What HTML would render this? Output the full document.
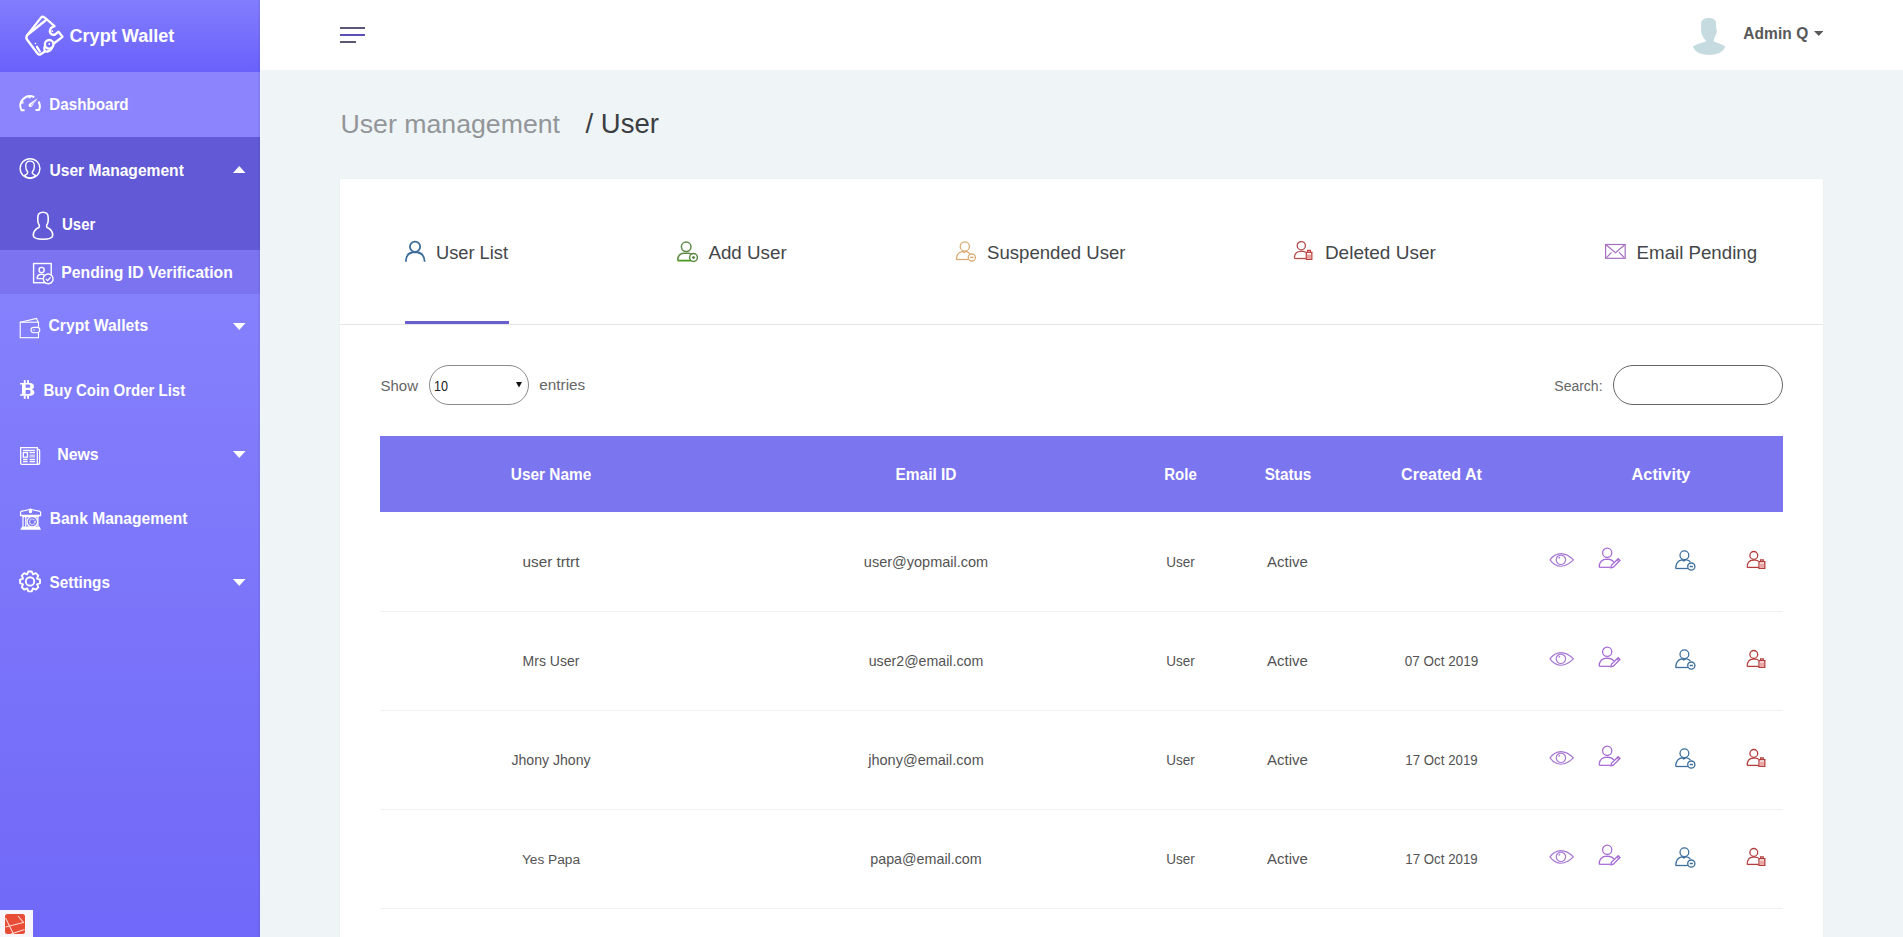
<!DOCTYPE html>
<html><head><meta charset="utf-8">
<style>
html,body{margin:0;padding:0;}
body{width:1903px;height:937px;overflow:hidden;position:relative;background:#eff4f7;font-family:"Liberation Sans",sans-serif;}
.t{position:absolute;white-space:nowrap;}
.i{position:absolute;}
#sb{position:absolute;left:0;top:0;width:260px;height:937px;background:linear-gradient(#8f8cfe,#7068f8);}
#logo{position:absolute;left:0;top:0;width:260px;height:72px;background:linear-gradient(#827dfe,#6a61fb);}
#hdr{position:absolute;left:260px;top:0;width:1643px;height:70px;background:#fff;}
#card{position:absolute;left:340px;top:179px;width:1483px;height:800px;background:#fff;box-shadow:0 0 1px rgba(0,0,0,0.08);}
</style></head><body>
<div id="sb"></div><div id="logo"></div><div style="position:absolute;left:0;top:72px;width:260px;height:65px;background:#8b84fd"></div><div style="position:absolute;left:0;top:137px;width:260px;height:113px;background:#6159d5"></div><div style="position:absolute;left:0;top:250px;width:260px;height:44px;background:#7b73f0"></div><div style="position:absolute;left:258px;top:0;width:2px;height:937px;background:rgba(60,60,90,0.07)"></div><div class="t" style="top:25.66px;font-size:18.1px;line-height:21.72px;font-weight:700;color:#ffffff;left:69.5px;transform:scaleY(1.03);transform-origin:0 17.14px;">Crypt Wallet</div>
<div class="t" style="top:96.21px;font-size:15.2px;line-height:18.24px;font-weight:700;color:#ffffff;left:49.3px;transform:scaleY(1.08);transform-origin:0 14.39px;">Dashboard</div>
<div class="t" style="top:161.83px;font-size:15.6px;line-height:18.72px;font-weight:700;color:#ffffff;left:49.5px;transform:scaleY(1.08);transform-origin:0 14.77px;">User Management</div>
<div class="t" style="top:215.90px;font-size:15.0px;line-height:18.0px;font-weight:700;color:#ffffff;left:62px;transform:scaleY(1.08);transform-origin:0 14.20px;">User</div>
<div class="t" style="top:263.69px;font-size:15.75px;line-height:18.9px;font-weight:700;color:#ffffff;left:61.3px;transform:scaleY(1.08);transform-origin:0 14.91px;">Pending ID Verification</div>
<div class="t" style="top:317.24px;font-size:15.7px;line-height:18.84px;font-weight:700;color:#ffffff;left:48.5px;transform:scaleY(1.08);transform-origin:0 14.86px;">Crypt Wallets</div>
<div class="t" style="top:382.10px;font-size:15.0px;line-height:18.0px;font-weight:700;color:#ffffff;left:43.5px;transform:scaleY(1.08);transform-origin:0 14.20px;">Buy Coin Order List</div>
<div class="t" style="top:445.25px;font-size:15.9px;line-height:19.08px;font-weight:700;color:#ffffff;left:57.2px;transform:scaleY(1.08);transform-origin:0 15.05px;">News</div>
<div class="t" style="top:509.83px;font-size:15.6px;line-height:18.72px;font-weight:700;color:#ffffff;left:49.7px;transform:scaleY(1.08);transform-origin:0 14.77px;">Bank Management</div>
<div class="t" style="top:574.32px;font-size:15.3px;line-height:18.36px;font-weight:700;color:#ffffff;left:49.6px;transform:scaleY(1.08);transform-origin:0 14.48px;">Settings</div>
<svg class="i" style="left:233px;top:165.8px" width="12.5" height="7"><polygon points="0,7 12.5,7 6.25,0" fill="#fff"/></svg>
<svg class="i" style="left:233px;top:323px" width="12.5" height="7"><polygon points="0,0 12.5,0 6.25,7" fill="#fff"/></svg>
<svg class="i" style="left:233px;top:451px" width="12.5" height="7"><polygon points="0,0 12.5,0 6.25,7" fill="#fff"/></svg>
<svg class="i" style="left:233px;top:579px" width="12.5" height="7"><polygon points="0,0 12.5,0 6.25,7" fill="#fff"/></svg>
<div id="hdr"></div><div class="i" style="left:340px;top:27px;width:25px;height:2px;background:#5d5679"></div><div class="i" style="left:340px;top:34px;width:25px;height:2px;background:#5a4fb3"></div><div class="i" style="left:340px;top:41px;width:16px;height:2px;background:#5b5672"></div><div class="t" style="top:25.33px;font-size:15.5px;line-height:18.6px;font-weight:700;color:#585858;left:1743.2px;transform:scaleY(1.06);transform-origin:0 14.67px;letter-spacing:0.1px;">Admin Q</div>
<svg class="i" style="left:1813.5px;top:30.5px" width="9.5" height="5"><polygon points="0,0 9.5,0 4.75,5" fill="#5a5a5a"/></svg>
<div class="t" style="top:108.22px;font-size:26.7px;line-height:32.04px;font-weight:400;color:#939699;left:340.5px;">User management</div>
<div class="t" style="top:107.47px;font-size:27.5px;line-height:33.0px;font-weight:400;color:#3b3e41;left:585.5px;">/ User</div>
<div id="card"></div><div class="t" style="top:242.02px;font-size:18.25px;line-height:21.9px;font-weight:400;color:#444649;left:436px;">User List</div>
<div class="t" style="top:241.50px;font-size:18.8px;line-height:22.56px;font-weight:400;color:#444649;left:708.4px;">Add User</div>
<div class="t" style="top:241.69px;font-size:18.6px;line-height:22.32px;font-weight:400;color:#444649;left:987px;">Suspended User</div>
<div class="t" style="top:241.81px;font-size:19.0px;line-height:22.8px;font-weight:400;color:#444649;left:1324.9px;">Deleted User</div>
<div class="t" style="top:241.60px;font-size:18.7px;line-height:22.44px;font-weight:400;color:#444649;left:1636.6px;">Email Pending</div>
<div class="i" style="left:340px;top:324px;width:1483px;height:1px;background:#e6e6e6"></div><div class="i" style="left:405px;top:321px;width:104px;height:3px;background:#6a5fcf"></div><div class="t" style="top:376.60px;font-size:15.0px;line-height:18.0px;font-weight:400;color:#666;left:380.5px;">Show</div>
<div class="i" style="left:429px;top:365px;width:98px;height:38px;border:1px solid #8a8a8a;border-radius:20px;background:#fff"></div><div class="t" style="top:377.00px;font-size:15px;line-height:18.0px;font-weight:400;color:#222;left:433.6px;transform:scale(0.84,0.99);transform-origin:0 14.5px;">10</div>
<svg class="i" style="left:516px;top:382px" width="6" height="6"><polygon points="0,0 6,0 3,5.5" fill="#111"/></svg><div class="t" style="top:376.32px;font-size:15.3px;line-height:18.36px;font-weight:400;color:#666;left:539.3px;">entries</div>
<div class="t" style="top:377.95px;font-size:14.0px;line-height:16.8px;font-weight:400;color:#666;left:1554.3px;">Search:</div>
<div class="i" style="left:1613px;top:365px;width:168px;height:38px;border:1px solid #666;border-radius:20px;background:#fff"></div><div class="i" style="left:380px;top:436px;width:1403px;height:76px;background:#7b75f0"></div><div class="t" style="top:465.92px;font-size:15.4px;line-height:18.48px;font-weight:700;color:#fff;left:51px;width:1000px;text-align:center;transform:scaleY(1.06);transform-origin:0 14.58px;">User Name</div>
<div class="t" style="top:465.83px;font-size:15.5px;line-height:18.6px;font-weight:700;color:#fff;left:426px;width:1000px;text-align:center;transform:scaleY(1.06);transform-origin:0 14.67px;">Email ID</div>
<div class="t" style="top:466.30px;font-size:15.0px;line-height:18.0px;font-weight:700;color:#fff;left:680.5px;width:1000px;text-align:center;transform:scaleY(1.06);transform-origin:0 14.20px;">Role</div>
<div class="t" style="top:466.02px;font-size:15.3px;line-height:18.36px;font-weight:700;color:#fff;left:788px;width:1000px;text-align:center;transform:scaleY(1.06);transform-origin:0 14.48px;">Status</div>
<div class="t" style="top:465.26px;font-size:16.1px;line-height:19.32px;font-weight:700;color:#fff;left:941.5px;width:1000px;text-align:center;transform:scaleY(1.06);transform-origin:0 15.24px;">Created At</div>
<div class="t" style="top:465.07px;font-size:16.3px;line-height:19.56px;font-weight:700;color:#fff;left:1161px;width:1000px;text-align:center;transform:scaleY(1.06);transform-origin:0 15.43px;">Activity</div>
<div class="t" style="top:553.02px;font-size:15.3px;line-height:18.36px;font-weight:400;color:#535353;left:51px;width:1000px;text-align:center;">user trtrt</div>
<div class="t" style="top:553.77px;font-size:14.5px;line-height:17.4px;font-weight:400;color:#535353;left:426px;width:1000px;text-align:center;">user@yopmail.com</div>
<div class="t" style="top:554.72px;font-size:13.5px;line-height:16.2px;font-weight:400;color:#535353;left:680.5px;width:1000px;text-align:center;transform:scaleY(1.08);transform-origin:0 12.78px;">User</div>
<div class="t" style="top:553.30px;font-size:15.0px;line-height:18.0px;font-weight:400;color:#535353;left:787.5px;width:1000px;text-align:center;">Active</div>
<div class="i" style="left:380px;top:611px;width:1403px;height:1px;background:#f1f1f1"></div><div class="t" style="top:653.25px;font-size:14.0px;line-height:16.8px;font-weight:400;color:#535353;left:51px;width:1000px;text-align:center;">Mrs User</div>
<div class="t" style="top:653.06px;font-size:14.2px;line-height:17.04px;font-weight:400;color:#535353;left:426px;width:1000px;text-align:center;">user2@email.com</div>
<div class="t" style="top:653.72px;font-size:13.5px;line-height:16.2px;font-weight:400;color:#535353;left:680.5px;width:1000px;text-align:center;transform:scaleY(1.08);transform-origin:0 12.78px;">User</div>
<div class="t" style="top:652.30px;font-size:15.0px;line-height:18.0px;font-weight:400;color:#535353;left:787.5px;width:1000px;text-align:center;">Active</div>
<div class="t" style="top:653.72px;font-size:13.5px;line-height:16.2px;font-weight:400;color:#535353;left:941.5px;width:1000px;text-align:center;transform:scaleY(1.06);transform-origin:0 12.78px;">07 Oct 2019</div>
<div class="i" style="left:380px;top:710px;width:1403px;height:1px;background:#f1f1f1"></div><div class="t" style="top:752.15px;font-size:14.1px;line-height:16.92px;font-weight:400;color:#535353;left:51px;width:1000px;text-align:center;">Jhony Jhony</div>
<div class="t" style="top:751.77px;font-size:14.5px;line-height:17.4px;font-weight:400;color:#535353;left:426px;width:1000px;text-align:center;">jhony@email.com</div>
<div class="t" style="top:752.72px;font-size:13.5px;line-height:16.2px;font-weight:400;color:#535353;left:680.5px;width:1000px;text-align:center;transform:scaleY(1.08);transform-origin:0 12.78px;">User</div>
<div class="t" style="top:751.30px;font-size:15.0px;line-height:18.0px;font-weight:400;color:#535353;left:787.5px;width:1000px;text-align:center;">Active</div>
<div class="t" style="top:752.91px;font-size:13.3px;line-height:15.96px;font-weight:400;color:#535353;left:941.5px;width:1000px;text-align:center;transform:scaleY(1.06);transform-origin:0 12.59px;">17 Oct 2019</div>
<div class="i" style="left:380px;top:809px;width:1403px;height:1px;background:#f1f1f1"></div><div class="t" style="top:851.53px;font-size:13.7px;line-height:16.44px;font-weight:400;color:#535353;left:51px;width:1000px;text-align:center;">Yes Papa</div>
<div class="t" style="top:850.96px;font-size:14.3px;line-height:17.16px;font-weight:400;color:#535353;left:426px;width:1000px;text-align:center;">papa@email.com</div>
<div class="t" style="top:851.72px;font-size:13.5px;line-height:16.2px;font-weight:400;color:#535353;left:680.5px;width:1000px;text-align:center;transform:scaleY(1.08);transform-origin:0 12.78px;">User</div>
<div class="t" style="top:850.30px;font-size:15.0px;line-height:18.0px;font-weight:400;color:#535353;left:787.5px;width:1000px;text-align:center;">Active</div>
<div class="t" style="top:851.91px;font-size:13.3px;line-height:15.96px;font-weight:400;color:#535353;left:941.5px;width:1000px;text-align:center;transform:scaleY(1.06);transform-origin:0 12.59px;">17 Oct 2019</div>
<div class="i" style="left:380px;top:908px;width:1403px;height:1px;background:#f1f1f1"></div><svg class="i" style="left:20px;top:10px" width="50" height="50" viewBox="0 0 50 50"><g fill="none" stroke="#ffffff" stroke-width="2.3" stroke-linejoin="round" stroke-linecap="round">
<path d="M7,25.5 L21,7.6 Q22.5,6 24,7.2 L27.5,10 L34.5,16.2 Q30,17.5 29.8,21.5 Q30.5,25.5 35,24.6 L38.5,21.7 L42.5,26.8 L33.8,33.5"/>
<path d="M7,25.5 Q5.5,28 7.5,30.2 L17.5,43.5 Q19,45.5 21,44 L24.5,41.8"/>
<path d="M8.5,24 L25.5,10.5"/>
<circle cx="32.3" cy="21.2" r="0.9" fill="#ffffff" stroke="none"/>
<circle cx="29.2" cy="34.3" r="4.3"/>
<path d="M24.5,37 Q23.5,42 27.5,41.5 Q31,41 32,37.5"/>
<circle cx="29.3" cy="34" r="0.9" fill="#ffffff" stroke="none"/>
<circle cx="15.5" cy="33.6" r="0.8" fill="#ffffff" stroke="none"/>
<path d="M17,36.8 L19.8,41.5"/>
</g></svg>
<svg class="i" style="left:15px;top:90px" width="30" height="30" viewBox="0 0 30 30"><g fill="none" stroke="#ffffff" stroke-width="2" stroke-linecap="butt">
<path d="M6.6,20.3 A9.6,9.6 0 0 1 19.3,7.1"/>
<path d="M23.6,11.5 A9.6,9.6 0 0 1 24.1,19.8"/>
<path d="M5.8,20.3 L9.6,20.3 M20.5,20 L24.6,20 M5.6,12.6 L8.6,12.6 M14.6,6 L14.6,8.2"/>
</g>
<path d="M22.6,8.2 L17.2,16.2 Q15.6,17.8 14,16.6 Q12.8,15.2 14.2,13.8 Z" fill="#ffffff"/>
<path d="M20.3,11.3 L15.8,15.6" stroke="#8b84fd" stroke-width="0.8" fill="none"/></svg>
<svg class="i" style="left:15px;top:153px" width="30" height="30" viewBox="0 0 30 30"><g fill="none" stroke="#ffffff" stroke-width="1.4" stroke-linejoin="round">
<circle cx="15.05" cy="15.6" r="9.9"/>
<path d="M12.8,19.2 Q10.7,17 10.7,13 Q10.7,8.1 15,8.1 Q19.4,8.1 19.4,13 Q19.4,17 17.2,19.2 Q17.4,21.2 20.6,22.4 Q18.4,25 15,25 Q11.6,25 9.5,22.4 Q12.6,21.2 12.8,19.2 Z"/>
</g></svg>
<svg class="i" style="left:28px;top:208px" width="30" height="36" viewBox="0 0 30 36"><g fill="none" stroke="#ffffff" stroke-width="1.6" stroke-linejoin="round">
<path d="M15,4.3 Q9.8,4.3 9.8,9.5 L9.8,12.5 Q9.9,15.2 11.2,17 Q11.8,18.5 10.8,19.6 Q5.3,22 5.3,27.5 Q5.5,31.2 15,31.3 Q24.5,31.2 24.7,27.5 Q24.7,22 19.2,19.6 Q18.2,18.5 18.8,17 Q20.1,15.2 20.2,12.5 L20.2,9.5 Q20.2,4.3 15,4.3 Z"/>
</g></svg>
<svg class="i" style="left:28px;top:258px" width="30" height="30" viewBox="0 0 30 30"><g fill="none" stroke="#ffffff" stroke-width="1.4">
<rect x="5.6" y="5.5" width="17.6" height="19.2"/>
<circle cx="13.6" cy="12" r="2.6"/>
<path d="M16.8,17.5 Q15,16.2 13.6,16.2 Q9.5,16.2 9.3,19.5 L9.3,20.6 L16,20.6"/>
</g>
<circle cx="20.2" cy="20.9" r="4.9" fill="#7a71ef" stroke="#ffffff" stroke-width="1.4"/>
<path d="M17.9,21 L19.6,22.6 L22.6,19.3" fill="none" stroke="#ffffff" stroke-width="1.3"/></svg>
<svg class="i" style="left:15px;top:312px" width="30" height="30" viewBox="0 0 30 30"><g fill="none" stroke="#ffffff" stroke-width="1.1">
<path d="M5.5,10.3 L21.5,6.5 L23.2,10.3"/>
<rect x="5.2" y="10.2" width="18.3" height="15.5"/>
<rect x="16" y="15.4" width="8.8" height="5.3" rx="2.6" fill="#8480fb"/>
<circle cx="19" cy="18" r="0.7" fill="#ffffff" stroke="none"/>
</g></svg>
<svg class="i" style="left:15px;top:375px" width="25" height="30" viewBox="0 0 25 30"><g fill="#ffffff">
<path fill-rule="evenodd" d="M5.1,8 L15,8 Q19,8.2 19,11.5 Q19,13.5 17,14.2 Q19.4,15 19.4,17.6 Q19.3,20.7 15.2,20.8 L5.1,20.8 L5.1,19.2 L7,19.2 L7,9.6 L5.1,9.6 Z M10.6,9.6 L10.6,12.8 L14,12.8 Q15.3,12.7 15.3,11.2 Q15.2,9.7 14,9.6 Z M10.6,15 L10.6,18.9 L14.2,18.9 Q15.6,18.8 15.6,16.95 Q15.5,15.1 14.2,15 Z"/>
<rect x="8.8" y="5.1" width="1.9" height="3.2"/><rect x="12.1" y="5.1" width="1.9" height="3.2"/>
<rect x="8.8" y="20.5" width="1.9" height="3.3"/><rect x="12.1" y="20.5" width="1.9" height="3.3"/>
</g></svg>
<svg class="i" style="left:15px;top:442px" width="30" height="30" viewBox="0 0 30 30"><g fill="none" stroke="#ffffff" stroke-width="1.3">
<path d="M5.7,5.6 L22.3,5.6 L22.3,20.6 Q22.4,22.6 24,22.3 L7,22.3 Q5.7,22.3 5.7,21 Z"/>
<path d="M22.3,7.3 L23.4,7.3 Q24.6,7.4 24.6,8.6 L24.6,21 Q24.6,22.3 23.3,22.3"/>
<path d="M8,8.5 L20,8.5 M8,17.5 L12.6,17.5 M8,19.6 L12.6,19.6 M14.5,17.5 L20,17.5 M14.5,19.6 L20,19.6 M14.5,10.6 L20,10.6"/>
<rect x="8.3" y="10.6" width="4.2" height="4.6"/>
</g>
<rect x="14.5" y="12.4" width="5.5" height="3.2" fill="#ffffff" opacity="0.6"/></svg>
<svg class="i" style="left:15px;top:504px" width="30" height="30" viewBox="0 0 30 30"><g fill="none" stroke="#ffffff" stroke-width="1.2">
<path d="M5.5,8.5 Q5.6,7 9.5,6.7 Q12.5,6.1 15.5,5 Q18.5,6.1 21.5,6.7 Q25.5,7 25.6,8.5 L25.6,11.7 L5.5,11.7 Z"/>
<path d="M5.5,11.3 L25.6,11.3 M15.5,5.3 L15.5,8.5"/>
<circle cx="15.5" cy="7.4" r="1.2"/>
<path d="M7.2,12.7 L24,12.7 M8,12.7 L8,22.8 M10.8,12.7 L10.8,22.8 M22.9,12.7 L22.9,22.8"/>
<circle cx="17.3" cy="17.8" r="5.3"/>
<circle cx="17.3" cy="17.8" r="2.8" stroke-dasharray="1.2 0.8"/>
</g>
<path d="M5.3,25.8 L7,22.6 L24.5,22.6 L26,25.8 Z" fill="#ffffff"/></svg>
<svg class="i" style="left:15px;top:566px" width="30" height="30" viewBox="0 0 30 30"><g fill="none" stroke="#ffffff" stroke-width="1.9" stroke-linejoin="round">
<path d="M12.16,8.37 L13.34,5.45 L16.76,5.45 L17.94,8.37 L17.98,8.39 L20.88,7.15 L23.30,9.57 L22.06,12.47 L22.08,12.51 L25.00,13.69 L25.00,17.11 L22.08,18.29 L22.06,18.33 L23.30,21.23 L20.88,23.65 L17.98,22.41 L17.94,22.43 L16.76,25.35 L13.34,25.35 L12.16,22.43 L12.12,22.41 L9.22,23.65 L6.80,21.23 L8.04,18.33 L8.02,18.29 L5.10,17.11 L5.10,13.69 L8.02,12.51 L8.04,12.47 L6.80,9.57 L9.22,7.15 L12.12,8.39 Z"/>
<circle cx="15.05" cy="15.4" r="4.2"/>
</g></svg>
<svg class="i" style="left:1685px;top:12px" width="45" height="48" viewBox="0 0 45 48"><path fill="#c6dbe0" d="M16.2,10.5 Q17,5.9 23.8,5.9 Q30.8,6 31,10.5 L31.2,16.5 Q32.3,18 31.6,21 Q31,23 30.2,23.8 Q29.6,26.3 28.7,28 L28.9,29.6 Q36,31.8 40.3,34.6 Q37.5,42.9 24,42.9 Q10.5,42.9 7.8,34.6 Q13,31.5 20.8,29.6 L20.9,28.5 Q18,26 16.6,22 Q16,19 16.1,16 Z"/></svg>
<svg class="i" style="left:400px;top:237px" width="30" height="30" viewBox="0 0 30 30"><g fill="none" stroke="#3c6d99" stroke-width="1.8">
<circle cx="15.05" cy="9.7" r="5.1"/>
<path d="M5.8,24.8 Q5.8,15.4 15,15 Q24.4,15.4 24.7,24.8"/>
</g></svg>
<svg class="i" style="left:672px;top:237px" width="30" height="30" viewBox="0 0 30 30"><g fill="none" stroke="#5e8a48" stroke-width="1.5">
<circle cx="14.2" cy="9.8" r="4.8"/>
<path d="M5.6,23.5 Q5.8,16.6 12,16.3 L16.8,16.3 Q18.5,16.4 19.5,17.6"/>
<circle cx="21.5" cy="20.5" r="3.9"/>
<path d="M19.9,20.5 L23.1,20.5 M21.5,18.9 L21.5,22.1" stroke-width="1.3"/>
</g>
<path d="M5.6,23.6 L19,23.6" stroke="#4f9a1e" stroke-width="1.8"/></svg>
<svg class="i" style="left:951px;top:237px" width="30" height="30" viewBox="0 0 30 30"><g fill="none" stroke="#d6a76c" stroke-width="1.2">
<circle cx="13.8" cy="9.4" r="4.6"/>
<path d="M5.3,22.5 Q5.5,15.5 11.5,14.5 L13,15.5 L14.8,14.3 Q17.5,14.8 18.8,16.8"/>
<path d="M5.3,22.5 L17.2,22.5"/>
<circle cx="20.8" cy="20.5" r="3.6"/>
<path d="M19.1,20.4 L22.5,20.4" stroke-width="1.4"/>
</g></svg>
<svg class="i" style="left:1289px;top:237px" width="30" height="30" viewBox="0 0 30 30"><g fill="none" stroke="#b34a4a" stroke-width="1.3">
<circle cx="12.3" cy="8.7" r="4.1"/>
<path d="M5.4,21.3 Q5.4,14.6 11.5,14.4 L14,14.4 Q15.8,14.6 16.6,15.4"/>
<path d="M5.4,21.5 L16.8,21.5"/>
</g>
<g fill="none" stroke="#c0413f" stroke-width="1.3">
<path d="M16.4,15.4 L23.6,15.4 M17.3,15.4 L17.3,22.3 L22.8,22.3 L22.8,15.4 M18.6,15.2 L18.6,13.4 L21.4,13.4 L21.4,15.2"/>
</g>
<rect x="17.9" y="17.5" width="4.3" height="4.4" fill="#e7a3a2"/></svg>
<svg class="i" style="left:1600px;top:237px" width="30" height="30" viewBox="0 0 30 30"><g fill="none" stroke="#a46fc0" stroke-width="1.2">
<rect x="5.6" y="7.5" width="19.6" height="13.8"/>
<path d="M6.3,8 L15.5,15.6 L24.5,8 M6.5,20.6 L11.5,15.4 M19,15.2 L24.3,20.7"/>
</g></svg>
<div class="i" style="left:0;top:910px;width:33px;height:27px;background:#f8f5fb"></div>
<svg class="i" style="left:0px;top:910px" width="33" height="27" viewBox="0 0 33 27"><rect x="5" y="4" width="20" height="20" rx="2.5" fill="#e84b36"/>
<g stroke="#ffd9d0" stroke-width="1.1" fill="none"><path d="M5.5,8 L13.5,24 M18,6 L23.5,12.5 L5.5,17 M11,24 L24.5,19.5"/></g></svg>
<svg class="i" style="left:1545.3px;top:550px" width="30" height="20" viewBox="0 0 30 20"><g fill="none" stroke="#a676d2" stroke-width="1.15">
<path d="M5,9.9 Q9.5,3.6 15.9,3.6 Q22.2,3.6 28.4,9.9 Q22.2,16.2 15.9,16.2 Q9.5,16.2 5,9.9 Z"/>
<circle cx="15.9" cy="9.8" r="4.7"/>
<path d="M13.8,8.6 Q14.1,7.4 15.1,7.1"/>
</g></svg>
<svg class="i" style="left:1595px;top:543.5px" width="30" height="30" viewBox="0 0 30 30"><g fill="none" stroke="#a56ad4" stroke-width="1.25">
<circle cx="12.2" cy="8.8" r="4.6"/>
<path d="M4.2,23.3 Q4.2,15.2 12.2,15.1 Q16.6,15.2 18.9,17.8"/>
<path d="M4.2,23.3 L15.6,23.3"/>
<path d="M16,23.9 L16.4,21.3 L23.2,14.7 L25,16.4 L18.3,23.2 Z M21.9,15.9 L23.7,17.6"/>
</g></svg>
<svg class="i" style="left:1670.7px;top:543px" width="30" height="30" viewBox="0 0 30 30"><g fill="none" stroke="#3d6f9d" stroke-width="1.3">
<circle cx="13.4" cy="12.2" r="4.4"/>
<path d="M4.7,25.5 Q4.9,18 10.7,16.8 L12.8,18 L15,16.6 Q17.9,17 19.4,19"/>
<path d="M4.7,25.5 L16.9,25.5"/>
<circle cx="20.3" cy="23.6" r="3.6"/>
<path d="M18.7,23.5 L21.9,23.5" stroke-width="1.5"/>
</g></svg>
<svg class="i" style="left:1740px;top:543.5px" width="30" height="30" viewBox="0 0 30 30"><g fill="none" stroke="#b33c3c" stroke-width="1.3">
<circle cx="13.8" cy="11.4" r="3.9"/>
<path d="M7.2,23.4 Q7.2,16.5 13,16.2 L15.5,16.2 Q17.5,16.4 18.5,17.2"/>
<path d="M7.2,23.4 L18.8,23.4"/>
<path d="M18.3,17.6 L25.5,17.6 M19,17.6 L19,24.4 L24.8,24.4 L24.8,17.6 M20.6,17.4 L20.6,15.9 L23.2,15.9 L23.2,17.4"/>
</g>
<rect x="19.7" y="19.5" width="4.4" height="4.2" fill="#eaa5a5"/></svg>
<svg class="i" style="left:1545.3px;top:649px" width="30" height="20" viewBox="0 0 30 20"><g fill="none" stroke="#a676d2" stroke-width="1.15">
<path d="M5,9.9 Q9.5,3.6 15.9,3.6 Q22.2,3.6 28.4,9.9 Q22.2,16.2 15.9,16.2 Q9.5,16.2 5,9.9 Z"/>
<circle cx="15.9" cy="9.8" r="4.7"/>
<path d="M13.8,8.6 Q14.1,7.4 15.1,7.1"/>
</g></svg>
<svg class="i" style="left:1595px;top:642.5px" width="30" height="30" viewBox="0 0 30 30"><g fill="none" stroke="#a56ad4" stroke-width="1.25">
<circle cx="12.2" cy="8.8" r="4.6"/>
<path d="M4.2,23.3 Q4.2,15.2 12.2,15.1 Q16.6,15.2 18.9,17.8"/>
<path d="M4.2,23.3 L15.6,23.3"/>
<path d="M16,23.9 L16.4,21.3 L23.2,14.7 L25,16.4 L18.3,23.2 Z M21.9,15.9 L23.7,17.6"/>
</g></svg>
<svg class="i" style="left:1670.7px;top:642px" width="30" height="30" viewBox="0 0 30 30"><g fill="none" stroke="#3d6f9d" stroke-width="1.3">
<circle cx="13.4" cy="12.2" r="4.4"/>
<path d="M4.7,25.5 Q4.9,18 10.7,16.8 L12.8,18 L15,16.6 Q17.9,17 19.4,19"/>
<path d="M4.7,25.5 L16.9,25.5"/>
<circle cx="20.3" cy="23.6" r="3.6"/>
<path d="M18.7,23.5 L21.9,23.5" stroke-width="1.5"/>
</g></svg>
<svg class="i" style="left:1740px;top:642.5px" width="30" height="30" viewBox="0 0 30 30"><g fill="none" stroke="#b33c3c" stroke-width="1.3">
<circle cx="13.8" cy="11.4" r="3.9"/>
<path d="M7.2,23.4 Q7.2,16.5 13,16.2 L15.5,16.2 Q17.5,16.4 18.5,17.2"/>
<path d="M7.2,23.4 L18.8,23.4"/>
<path d="M18.3,17.6 L25.5,17.6 M19,17.6 L19,24.4 L24.8,24.4 L24.8,17.6 M20.6,17.4 L20.6,15.9 L23.2,15.9 L23.2,17.4"/>
</g>
<rect x="19.7" y="19.5" width="4.4" height="4.2" fill="#eaa5a5"/></svg>
<svg class="i" style="left:1545.3px;top:748px" width="30" height="20" viewBox="0 0 30 20"><g fill="none" stroke="#a676d2" stroke-width="1.15">
<path d="M5,9.9 Q9.5,3.6 15.9,3.6 Q22.2,3.6 28.4,9.9 Q22.2,16.2 15.9,16.2 Q9.5,16.2 5,9.9 Z"/>
<circle cx="15.9" cy="9.8" r="4.7"/>
<path d="M13.8,8.6 Q14.1,7.4 15.1,7.1"/>
</g></svg>
<svg class="i" style="left:1595px;top:741.5px" width="30" height="30" viewBox="0 0 30 30"><g fill="none" stroke="#a56ad4" stroke-width="1.25">
<circle cx="12.2" cy="8.8" r="4.6"/>
<path d="M4.2,23.3 Q4.2,15.2 12.2,15.1 Q16.6,15.2 18.9,17.8"/>
<path d="M4.2,23.3 L15.6,23.3"/>
<path d="M16,23.9 L16.4,21.3 L23.2,14.7 L25,16.4 L18.3,23.2 Z M21.9,15.9 L23.7,17.6"/>
</g></svg>
<svg class="i" style="left:1670.7px;top:741px" width="30" height="30" viewBox="0 0 30 30"><g fill="none" stroke="#3d6f9d" stroke-width="1.3">
<circle cx="13.4" cy="12.2" r="4.4"/>
<path d="M4.7,25.5 Q4.9,18 10.7,16.8 L12.8,18 L15,16.6 Q17.9,17 19.4,19"/>
<path d="M4.7,25.5 L16.9,25.5"/>
<circle cx="20.3" cy="23.6" r="3.6"/>
<path d="M18.7,23.5 L21.9,23.5" stroke-width="1.5"/>
</g></svg>
<svg class="i" style="left:1740px;top:741.5px" width="30" height="30" viewBox="0 0 30 30"><g fill="none" stroke="#b33c3c" stroke-width="1.3">
<circle cx="13.8" cy="11.4" r="3.9"/>
<path d="M7.2,23.4 Q7.2,16.5 13,16.2 L15.5,16.2 Q17.5,16.4 18.5,17.2"/>
<path d="M7.2,23.4 L18.8,23.4"/>
<path d="M18.3,17.6 L25.5,17.6 M19,17.6 L19,24.4 L24.8,24.4 L24.8,17.6 M20.6,17.4 L20.6,15.9 L23.2,15.9 L23.2,17.4"/>
</g>
<rect x="19.7" y="19.5" width="4.4" height="4.2" fill="#eaa5a5"/></svg>
<svg class="i" style="left:1545.3px;top:847px" width="30" height="20" viewBox="0 0 30 20"><g fill="none" stroke="#a676d2" stroke-width="1.15">
<path d="M5,9.9 Q9.5,3.6 15.9,3.6 Q22.2,3.6 28.4,9.9 Q22.2,16.2 15.9,16.2 Q9.5,16.2 5,9.9 Z"/>
<circle cx="15.9" cy="9.8" r="4.7"/>
<path d="M13.8,8.6 Q14.1,7.4 15.1,7.1"/>
</g></svg>
<svg class="i" style="left:1595px;top:840.5px" width="30" height="30" viewBox="0 0 30 30"><g fill="none" stroke="#a56ad4" stroke-width="1.25">
<circle cx="12.2" cy="8.8" r="4.6"/>
<path d="M4.2,23.3 Q4.2,15.2 12.2,15.1 Q16.6,15.2 18.9,17.8"/>
<path d="M4.2,23.3 L15.6,23.3"/>
<path d="M16,23.9 L16.4,21.3 L23.2,14.7 L25,16.4 L18.3,23.2 Z M21.9,15.9 L23.7,17.6"/>
</g></svg>
<svg class="i" style="left:1670.7px;top:840px" width="30" height="30" viewBox="0 0 30 30"><g fill="none" stroke="#3d6f9d" stroke-width="1.3">
<circle cx="13.4" cy="12.2" r="4.4"/>
<path d="M4.7,25.5 Q4.9,18 10.7,16.8 L12.8,18 L15,16.6 Q17.9,17 19.4,19"/>
<path d="M4.7,25.5 L16.9,25.5"/>
<circle cx="20.3" cy="23.6" r="3.6"/>
<path d="M18.7,23.5 L21.9,23.5" stroke-width="1.5"/>
</g></svg>
<svg class="i" style="left:1740px;top:840.5px" width="30" height="30" viewBox="0 0 30 30"><g fill="none" stroke="#b33c3c" stroke-width="1.3">
<circle cx="13.8" cy="11.4" r="3.9"/>
<path d="M7.2,23.4 Q7.2,16.5 13,16.2 L15.5,16.2 Q17.5,16.4 18.5,17.2"/>
<path d="M7.2,23.4 L18.8,23.4"/>
<path d="M18.3,17.6 L25.5,17.6 M19,17.6 L19,24.4 L24.8,24.4 L24.8,17.6 M20.6,17.4 L20.6,15.9 L23.2,15.9 L23.2,17.4"/>
</g>
<rect x="19.7" y="19.5" width="4.4" height="4.2" fill="#eaa5a5"/></svg>

</body></html>
